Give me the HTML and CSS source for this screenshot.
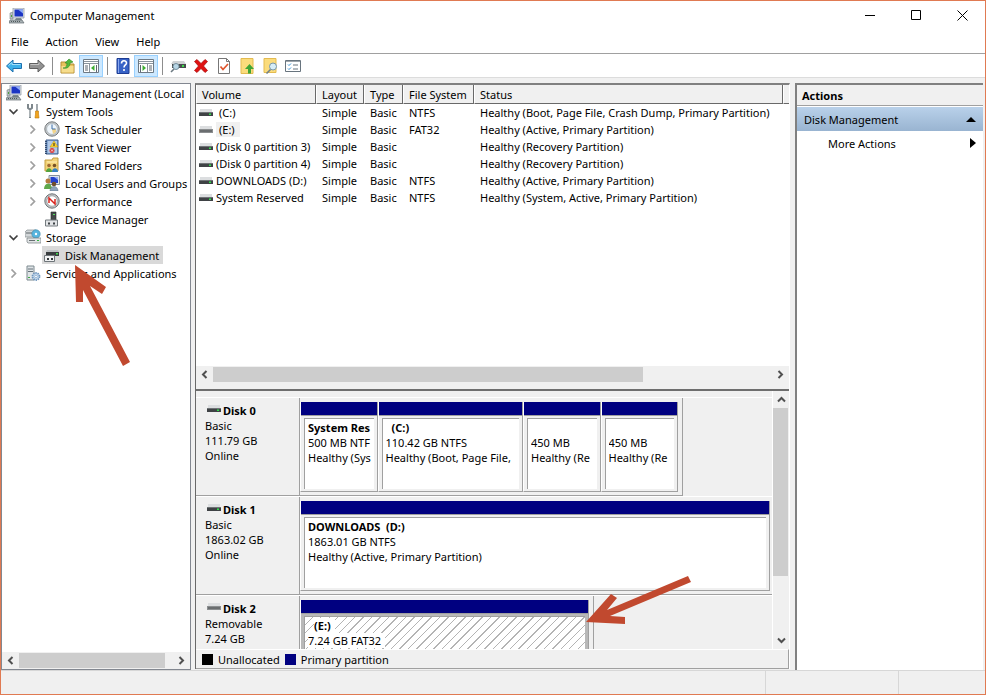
FILE: index.html
```
<!DOCTYPE html>
<html lang="en">
<head>
    <meta charset="UTF-8">
    <meta name="viewport" content="width=device-width, initial-scale=1.0">
    <title>Computer Management</title>
    <link rel="stylesheet" href="styles.css">
</head>
<body>
    <!-- Shared icons -->
    <svg class="defs" aria-hidden="true">
        <symbol id="computer" viewBox="0 0 16 16">
            <path d="M1 5l3-1v7H1z" fill="#b9c0c4" stroke="#7b8588" stroke-width=".6"/>
            <path d="M2 7h1v2H2z" fill="#4da03c"/>
            <path d="M4 0h11v10H4z" fill="#dfe3e8" stroke="#8a949e" stroke-width=".7"/>
            <path d="M5.500 1.500h8.500v7H5.500z" fill="#1c35c4"/>
            <path d="M9 1.500h5v4z" fill="#8eaaf5"/>
            <path d="M7 10h5l1 2H6z" fill="#7f8b92"/>
            <path d="M1 12h12l2 3H0z" fill="#aab3b6" stroke="#626c70" stroke-width=".7"/>
            <path d="M2 13.500h10" stroke="#4f585b" stroke-dasharray="1 1"/>
        </symbol>
        <symbol id="drive" viewBox="0 0 14 8">
            <path d="M1 0h12v3H1z" fill="#dcdee0"/>
            <path d="M0 3h14v4H0z" fill="#3f4245"/>
            <path d="M0 3h14v1H0z" fill="#6f7376"/>
            <path d="M10 4.500h2v1.500h-2z" fill="#2fe04a"/>
        </symbol>
        <symbol id="removable" viewBox="0 0 14 8">
            <path d="M1 0h12v3H1z" fill="#dcdee0"/>
            <path d="M0 3h14v4H0z" fill="#8b8e90"/>
            <path d="M1 4h12v2H1z" fill="#6a6d6f"/>
        </symbol>
        <symbol id="right" viewBox="0 0 9 9"><path d="M2.500 .5l4 4-4 4" fill="none" stroke="#a0a0a0" stroke-width="1.700"/></symbol>
        <symbol id="down" viewBox="0 0 9 9"><path d="M.5 2.500l4 4 4-4" fill="none" stroke="#404040" stroke-width="1.700"/></symbol>
        <symbol id="scroll-arrow" viewBox="0 0 9 9"><path d="M6.500 1L3 4.500 6.500 8" fill="none" stroke="#505050" stroke-width="2"/></symbol>
    </svg>

    <div class="window">
        <header class="titlebar">
            <svg class="icon"><use href="#computer"/></svg>
            <h1>Computer Management</h1>
            <div class="caption-buttons">
                <button aria-label="Minimize"><svg width="11" height="11"><path d="M0 5.500h10" stroke="#000"/></svg></button>
                <button aria-label="Maximize"><svg width="11" height="11"><path d="M.5 .5h9v9h-9z" fill="none" stroke="#000"/></svg></button>
                <button aria-label="Close"><svg width="11" height="11"><path d="M.5 .5l10 10M10.500 .5l-10 10" stroke="#000"/></svg></button>
            </div>
        </header>

        <nav class="menubar">
            <button>File</button>
            <button>Action</button>
            <button>View</button>
            <button>Help</button>
        </nav>

        <div class="toolbar">
            <button aria-label="Back">
                <svg class="icon" viewBox="0 0 16 16"><path d="M.5 8L7 2v3.500h8.500v5H7V14z" fill="#3eb1ea" stroke="#1c6fae"/><path d="M2.500 7.500L6 4.500v2h8.500" fill="none" stroke="#a4e1fb"/></svg>
            </button>
            <button aria-label="Forward">
                <svg class="icon" viewBox="0 0 16 16"><path d="M15.500 8L9 2v3.500H.5v5H9V14z" fill="#929292" stroke="#5f5f5f"/><path d="M1.500 6.500H10v-2" fill="none" stroke="#c4c4c4"/></svg>
            </button>
            <span class="separator"></span>
            <button aria-label="Up one level">
                <svg class="icon" viewBox="0 0 16 16"><path d="M1 4h5l1 2h7v9H1z" fill="#e8c25d" stroke="#b48e35"/><path d="M1.500 8h12v6.500h-12z" fill="#f6dd8d"/><path d="M3 10c3 0 4-2 4-5H5l4-4 4 3-3 1c0 4-3 6-7 5z" fill="#53b83c" stroke="#2f8a24" stroke-width=".6"/></svg>
            </button>
            <button class="pressed" aria-label="Show or hide console tree">
                <svg class="icon" viewBox="0 0 16 16"><path d="M.5 1.500h15v13H.5z" fill="#fff" stroke="#6d7984"/><path d="M1 3.500h14M1 5.500h14M6.500 6v8" stroke="#8a949d"/><path d="M2 8h3M2 10h3M2 12h3M13.500 7v7" stroke="#5c6670"/><path d="M11.500 7v6L8 10z" fill="#3dae33"/></svg>
            </button>
            <span class="separator"></span>
            <button aria-label="Help">
                <svg class="icon" viewBox="0 0 16 16"><path d="M2 .5h12v15H2z" fill="#3762c6" stroke="#1d3c93"/><path d="M3.500 1v14" stroke="#88a7ee"/><path d="M6.500 5.500c0-3.500 5-3.500 5-.5 0 2-2.500 2-2.500 4.500M9 11v2" fill="none" stroke="#fff" stroke-width="1.600"/></svg>
            </button>
            <button class="pressed" aria-label="Show or hide action pane">
                <svg class="icon" viewBox="0 0 16 16"><path d="M.5 1.500h15v13H.5z" fill="#fff" stroke="#6d7984"/><path d="M1 3.500h14M1 5.500h14M9.500 6v8" stroke="#8a949d"/><path d="M11 8h3M11 10h3M11 12h3M2.500 7v7" stroke="#5c6670"/><path d="M4.500 7v6L8 10z" fill="#3dae33"/></svg>
            </button>
            <span class="separator"></span>
            <button aria-label="Rescan disks">
                <svg class="icon" viewBox="0 0 16 16"><path d="M3 3h11l2 3H1z" fill="#cfd2d4"/><path d="M2 6h14v4H2z" fill="#484c4e"/><path d="M12 7h2v2h-2z" fill="#3fdc4c"/><circle cx="6" cy="8.500" r="3" fill="#b7d6e6" stroke="#76909e"/><path d="M4 11l-3 3" stroke="#6c7a82" stroke-width="1.600"/></svg>
            </button>
            <button aria-label="Delete">
                <svg class="icon" viewBox="0 0 16 16"><path d="M1.500 3.500L4 1.500l4 4 4-4 2.500 2L10.500 8l4 4.500-2.500 2-4-4-4 4-2.500-2L5.500 8z" fill="#e01212" stroke="#a30707" stroke-width=".7"/></svg>
            </button>
            <button aria-label="Properties">
                <svg class="icon" viewBox="0 0 16 16"><path d="M2.500 .5h8l3 3v12h-11z" fill="#fff" stroke="#777"/><path d="M10.500 .5v3h3" fill="none" stroke="#777"/><path d="M4.500 8.500l2.500 3 5-5.500" fill="none" stroke="#e0562d" stroke-width="1.700"/></svg>
            </button>
            <button aria-label="Open">
                <svg class="icon" viewBox="0 0 16 16"><path d="M2 .5h12v15H2z" fill="#fbdc7c" stroke="#e3bb50"/><path d="M10.500 6L15 11h-3v4.500H9V11H6z" fill="#3fa535"/></svg>
            </button>
            <button aria-label="Explore">
                <svg class="icon" viewBox="0 0 16 16"><path d="M2 .5h12v14H2z" fill="#fbdc7c" stroke="#e3bb50"/><circle cx="11" cy="8.500" r="3.500" fill="#d6edf7" stroke="#7897aa"/><path d="M8.500 11.500l-4 4" stroke="#70808a" stroke-width="1.600"/></svg>
            </button>
            <button aria-label="Settings">
                <svg class="icon" viewBox="0 0 16 16"><path d="M.5 2.500h15v11H.5z" fill="#fff" stroke="#68747e"/><path d="M1 3.500h14" stroke="#9da5ac"/><path d="M3 6.500l1 1L6 5.500M3 10.500l1 1L6 9.500" fill="none" stroke="#3392d8"/><path d="M8 7h5M8 11h5" stroke="#68747e"/></svg>
            </button>
        </div>

        <main class="content">
            <aside class="tree-pane">
                <ul class="tree">
                    <li class="root"><a href="#"><svg class="icon"><use href="#computer"/></svg>Computer Management (Local</a></li>
                    <li class="level1"><svg class="chevron"><use href="#down"/></svg><a href="#">
                        <svg class="icon" viewBox="0 0 16 16"><path d="M3 1v4l2 1.500L7 5V1M5 6v9" fill="none" stroke="#7e878c" stroke-width="2"/><path d="M5 7v7" stroke="#d9dddf"/><path d="M12 1v7" stroke="#8b9398" stroke-width="1.600"/><path d="M10.500 8h3v3l.5 4h-4l.5-4z" fill="#f1a41e" stroke="#bd780d" stroke-width=".6"/></svg>System Tools</a></li>
                    <li class="level2"><svg class="chevron"><use href="#right"/></svg><a href="#">
                        <svg class="icon" viewBox="0 0 16 16"><circle cx="8" cy="8" r="7.200" fill="#c6c9cb" stroke="#757a7d"/><circle cx="8" cy="8" r="5.400" fill="#eef5fb" stroke="#99a2a8" stroke-width=".6"/><path d="M8 8h4v3l-3 2z" fill="#f1d388"/><path d="M8 3.500V8h3.500" fill="none" stroke="#3d6fa8"/></svg>Task Scheduler</a></li>
                    <li class="level2"><svg class="chevron"><use href="#right"/></svg><a href="#">
                        <svg class="icon" viewBox="0 0 16 16"><path d="M2 1h12v14H2z" fill="#87a9d5" stroke="#42618e"/><path d="M4 3h9M4 5h9M4 7h9M4 9h9M4 11h9M4 13h9" stroke="#dce8f7"/><path d="M2 2v13" stroke="#314b70" stroke-width="2" stroke-dasharray="1 1"/><path d="M10 2l4 6H6z" fill="#ffd42c" stroke="#b99108" stroke-width=".5"/><path d="M10 4v3" stroke="#222"/><circle cx="8" cy="11.500" r="2.500" fill="#db3d3d"/><path d="M7 10.500l2 2m0-2l-2 2" stroke="#fff" stroke-width=".7"/></svg>Event Viewer</a></li>
                    <li class="level2"><svg class="chevron"><use href="#right"/></svg><a href="#">
                        <svg class="icon" viewBox="0 0 16 16"><path d="M1 3h7l1-2h5v13H1z" fill="#f2d277" stroke="#c49f42"/><path d="M3 5h10" stroke="#fff0b8"/><circle cx="5" cy="8.500" r="1.800" fill="#a06a34"/><circle cx="10.500" cy="8.500" r="1.800" fill="#775225"/><path d="M2 15c0-5 6-5 6 0z" fill="#53a33e"/><path d="M8 15c0-5 6-5 6 0z" fill="#3682c3"/></svg>Shared Folders</a></li>
                    <li class="level2"><svg class="chevron"><use href="#right"/></svg><a href="#">
                        <svg class="icon" viewBox="0 0 16 16"><path d="M5 .5h10.500v9H5z" fill="#e0e5ea" stroke="#85919c"/><path d="M6.500 2H14v6H6.500z" fill="#2443cd"/><path d="M10 2h4v3z" fill="#91adf4"/><circle cx="4" cy="6" r="2.500" fill="#b57b3e"/><circle cx="10" cy="9" r="2.300" fill="#704d2c"/><path d="M0 14c0-7 8-7 8 0z" fill="#60a84c"/><path d="M6 16c0-6 8-6 8 0z" fill="#8ca4bb" stroke="#596f83" stroke-width=".5"/></svg>Local Users and Groups</a></li>
                    <li class="level2"><svg class="chevron"><use href="#right"/></svg><a href="#">
                        <svg class="icon" viewBox="0 0 16 16"><circle cx="8" cy="8" r="7.200" fill="#bfc3c5" stroke="#6f7578"/><circle cx="8" cy="8" r="5.200" fill="#fff" stroke="#868d90" stroke-width=".6"/><path d="M5 10V5l6 6V6" fill="none" stroke="#d9241e" stroke-width="1.500"/></svg>Performance</a></li>
                    <li class="level2"><span class="chevron"></span><a href="#">
                        <svg class="icon" viewBox="0 0 16 16"><path d="M7 1h5v8H7z" fill="#45494b" stroke="#25282a" stroke-width=".6"/><path d="M9 3h2v1H9z" fill="#54df5d"/><path d="M1.500 9h12v6h-12z" fill="#e3e5e7" stroke="#747b7f"/><path d="M4 11.500h2v2H4zM9 11.500h2v2H9z" fill="#3c4144"/></svg>Device Manager</a></li>
                    <li class="level1"><svg class="chevron"><use href="#down"/></svg><a href="#">
                        <svg class="icon" viewBox="0 0 16 16"><path d="M0 3l2-2h9v7H0z" fill="#d2d6d8" stroke="#858c90" stroke-width=".7"/><path d="M1 4h6" stroke="#5c6468"/><circle cx="11" cy="5" r="4.200" fill="#58b5df" stroke="#3d84a6" stroke-width=".6"/><circle cx="11" cy="5" r="1.200" fill="#fff"/><path d="M2 9h14v5H3l-1-1z" fill="#e1e4e5" stroke="#747b7f" stroke-width=".7"/><path d="M4 11.500h6" stroke="#676e72"/><path d="M12 11h2v1h-2z" fill="#33b540"/></svg>Storage</a></li>
                    <li class="level2"><span class="chevron"></span><a href="#" class="selected">
                        <svg class="icon" viewBox="0 0 16 16"><path d="M3 3h11l1 2H2z" fill="#bfc3c5"/><path d="M2 5h13v4H2z" fill="#393d3f"/><path d="M12 6h2v1.500h-2z" fill="#42db50"/><path d="M.5 8.500h10v6H.5z" fill="#f0f1f2" stroke="#6e7579"/><path d="M3 11h2v2H3zM7 11h2v2H7z" fill="#34393c"/></svg>Disk Management</a></li>
                    <li class="level1"><svg class="chevron"><use href="#right"/></svg><a href="#">
                        <svg class="icon" viewBox="0 0 16 16"><path d="M2 1h7v14H2z" fill="#dfe4e7" stroke="#7d898f"/><path d="M3 4h5M3 6.500h5" stroke="#66727a"/><path d="M3 12h2v1H3z" fill="#3dac42"/><circle cx="11" cy="11.500" r="3.500" fill="#c8dcf0" stroke="#6f95bd" stroke-width="1.800" stroke-dasharray="1.400 .8"/><circle cx="11" cy="11.500" r="1.300" fill="#fff" stroke="#6f95bd" stroke-width=".6"/></svg>Services and Applications</a></li>
                </ul>
                <div class="hscroll">
                    <button aria-label="Scroll left"><svg class="arrow"><use href="#scroll-arrow"/></svg></button>
                    <div class="track"><div class="thumb tree-thumb"></div></div>
                    <button aria-label="Scroll right"><svg class="arrow turn-right"><use href="#scroll-arrow"/></svg></button>
                </div>
            </aside>

            <section class="middle">
                <div class="volumes">
                    <div class="table-wrap">
                        <table>
                            <colgroup>
                                <col class="col-volume"><col class="col-layout"><col class="col-type"><col class="col-fs"><col class="col-status"><col>
                            </colgroup>
                            <thead>
                                <tr><th>Volume</th><th>Layout</th><th>Type</th><th>File System</th><th>Status</th><th></th></tr>
                            </thead>
                            <tbody>
                                <tr><td><svg class="drive"><use href="#drive"/></svg><span class="letter">(C:)</span></td><td>Simple</td><td>Basic</td><td>NTFS</td><td>Healthy (Boot, Page File, Crash Dump, Primary Partition)</td><td></td></tr>
                                <tr><td><svg class="drive"><use href="#removable"/></svg><span class="letter current">(E:)</span></td><td>Simple</td><td>Basic</td><td>FAT32</td><td>Healthy (Active, Primary Partition)</td><td></td></tr>
                                <tr><td><svg class="drive"><use href="#drive"/></svg>(Disk 0 partition 3)</td><td>Simple</td><td>Basic</td><td></td><td>Healthy (Recovery Partition)</td><td></td></tr>
                                <tr><td><svg class="drive"><use href="#drive"/></svg>(Disk 0 partition 4)</td><td>Simple</td><td>Basic</td><td></td><td>Healthy (Recovery Partition)</td><td></td></tr>
                                <tr><td><svg class="drive"><use href="#drive"/></svg>DOWNLOADS (D:)</td><td>Simple</td><td>Basic</td><td>NTFS</td><td>Healthy (Active, Primary Partition)</td><td></td></tr>
                                <tr><td><svg class="drive"><use href="#drive"/></svg>System Reserved</td><td>Simple</td><td>Basic</td><td>NTFS</td><td>Healthy (System, Active, Primary Partition)</td><td></td></tr>
                            </tbody>
                        </table>
                    </div>
                    <div class="hscroll">
                        <button aria-label="Scroll left"><svg class="arrow"><use href="#scroll-arrow"/></svg></button>
                        <div class="track"><div class="thumb volume-thumb"></div></div>
                        <button aria-label="Scroll right"><svg class="arrow turn-right"><use href="#scroll-arrow"/></svg></button>
                    </div>
                </div>

                <div class="disks">
                    <div class="disk-view">
                        <div class="disk-list">
                            <div class="disk">
                                <div class="disk-info">
                                    <h2><svg class="drive"><use href="#drive"/></svg>Disk 0</h2>
                                    <p>Basic</p><p>111.79 GB</p><p>Online</p>
                                </div>
                                <div class="partitions disk0">
                                    <div class="partition small"><div class="bar"></div><div class="details"><h3>System Res</h3><p>500 MB NTF</p><p>Healthy (Sys</p></div></div>
                                    <div class="partition large"><div class="bar"></div><div class="details"><h3 class="letter-only">(C:)</h3><p>110.42 GB NTFS</p><p>Healthy (Boot, Page File,</p></div></div>
                                    <div class="partition small"><div class="bar"></div><div class="details"><h3></h3><p>450 MB</p><p>Healthy (Re</p></div></div>
                                    <div class="partition small"><div class="bar"></div><div class="details"><h3></h3><p>450 MB</p><p>Healthy (Re</p></div></div>
                                </div>
                            </div>
                            <div class="disk">
                                <div class="disk-info">
                                    <h2><svg class="drive"><use href="#drive"/></svg>Disk 1</h2>
                                    <p>Basic</p><p>1863.02 GB</p><p>Online</p>
                                </div>
                                <div class="partitions disk1">
                                    <div class="partition large"><div class="bar"></div><div class="details"><h3>DOWNLOADS&nbsp; (D:)</h3><p>1863.01 GB NTFS</p><p>Healthy (Active, Primary Partition)</p></div></div>
                                </div>
                            </div>
                            <div class="disk">
                                <div class="disk-info">
                                    <h2><svg class="drive"><use href="#removable"/></svg>Disk 2</h2>
                                    <p>Removable</p><p>7.24 GB</p>
                                </div>
                                <div class="partitions disk2">
                                    <div class="partition large active"><div class="bar"></div><div class="details"><h3 class="letter-only"><span>(E:)</span></h3><p><span>7.24 GB FAT32</span></p></div></div>
                                </div>
                            </div>
                        </div>
                        <div class="vscroll">
                            <button aria-label="Scroll up"><svg class="arrow turn-up"><use href="#scroll-arrow"/></svg></button>
                            <div class="vtrack"><div class="vthumb"></div></div>
                            <button aria-label="Scroll down"><svg class="arrow turn-down"><use href="#scroll-arrow"/></svg></button>
                        </div>
                    </div>
                    <div class="legend">
                        <span class="swatch unallocated"></span><span>Unallocated</span>
                        <span class="swatch primary"></span><span>Primary partition</span>
                    </div>
                </div>
            </section>

            <aside class="actions">
                <h2>Actions</h2>
                <button class="group">Disk Management<svg width="10" height="5"><path d="M5 0l5 5H0z"/></svg></button>
                <button class="more">More Actions<svg width="6" height="10"><path d="M0 0l6 5-6 5z"/></svg></button>
            </aside>
        </main>

        <footer class="statusbar"><span></span><span></span><span></span></footer>

        <!-- Pointers to the tree item and the E: partition -->
        <svg class="pointer tree-pointer" viewBox="0 0 56 102"><path d="M0 0L31 22 27 29 15 21 55 97 48 101 8 25V37H1z"/></svg>
        <svg class="pointer disk-pointer" viewBox="0 0 106 50"><path d="M0 46L25 18 31 22 21 34 102 0 105 6 24 40 39 41V48z"/></svg>
    </div>
</body>
</html>
```

FILE: styles.css
```
* {
    box-sizing: border-box;
}
body {
    margin: 0;
    font-family: "Noto Sans", "Open Sans", sans-serif;
    font-size: 11px;
    line-height: 15px;
    color: #000;
}
h1, h2, h3, p, ul {
    margin: 0;
    padding: 0;
    font-size: inherit;
}
button {
    margin: 0;
    padding: 0;
    border: none;
    background: none;
    font: inherit;
    color: inherit;
}
a {
    color: inherit;
    text-decoration: none;
}
svg {
    display: block;
    flex: none;
}
.defs {
    position: absolute;
    width: 0;
    height: 0;
}
.icon {
    width: 16px;
    height: 16px;
}
.window {
    position: relative;
    display: flex;
    flex-direction: column;
    height: 100vh;
    border: 1px solid #e07a52;
    background: #fff;
    overflow: hidden;
}

/* Title, menu and toolbar */
.titlebar {
    display: flex;
    align-items: center;
    height: 29px;
    padding-left: 8px;
    gap: 5px;
}
.titlebar h1 {
    font-weight: normal;
}
.caption-buttons {
    display: flex;
    margin-left: auto;
}
.caption-buttons button {
    display: flex;
    align-items: center;
    justify-content: center;
    width: 46px;
    height: 29px;
}
.menubar {
    display: flex;
    align-items: center;
    height: 24px;
    padding-left: 10px;
    gap: 17px;
    border-bottom: 1px solid #a0a0a0;
}
.toolbar {
    display: flex;
    align-items: center;
    height: 24px;
    padding: 1px 0 0 1px;
    border-bottom: 1px solid #dcdcdc;
}
.toolbar button {
    display: flex;
    align-items: center;
    justify-content: center;
    width: 23px;
    height: 22px;
}
.toolbar .pressed {
    width: 24px;
    background: #cce8ff;
    border: 1px solid #99d1ff;
}
.separator {
    width: 1px;
    height: 18px;
    margin: 0 3px 0 4px;
    background: #8d8d8d;
}

/* Three panes */
.content {
    display: grid;
    grid-template-columns: 190px 1fr 188px;
    column-gap: 5px;
    flex: 1;
    min-height: 0;
    padding: 5px 2px 0 0;
    background: #f0f0f0;
}
.tree-pane {
    display: flex;
    flex-direction: column;
    min-width: 0;
    border: 1px solid #828790;
    background: #fff;
}
.tree {
    flex: 1;
    min-height: 0;
    list-style: none;
    overflow: hidden;
}
.tree li {
    display: flex;
    align-items: center;
    height: 18px;
    white-space: nowrap;
}
.tree a {
    display: flex;
    align-items: center;
    height: 18px;
    gap: 5px;
    padding: 0 4px 0 2px;
}
.tree .selected {
    background: #d9d9d9;
}
.root {
    padding-left: 2px;
}
.level1 {
    padding-left: 4px;
}
.level2 {
    padding-left: 23px;
}
.chevron {
    width: 15px;
    height: 9px;
    margin-right: 2px;
}

/* Scroll bars */
.hscroll {
    display: flex;
    flex: none;
    height: 17px;
    background: #f0f0f0;
}
.hscroll button, .vscroll button {
    display: flex;
    align-items: center;
    justify-content: center;
    flex: none;
    width: 17px;
    height: 17px;
}
.arrow {
    width: 9px;
    height: 9px;
}
.turn-right {
    transform: rotate(180deg);
}
.turn-up {
    transform: rotate(90deg);
}
.turn-down {
    transform: rotate(270deg);
}
.track {
    flex: 1;
    padding: 1px 0;
}
.thumb {
    height: 15px;
    background: #cdcdcd;
}
.tree-thumb {
    width: 95%;
}
.volume-thumb {
    width: 77%;
}

/* Volume list */
.middle {
    display: flex;
    flex-direction: column;
    min-width: 0;
    margin: 0 0 1px -1px;
    border-left: 1px solid #696969;
    border-top: 2px solid #808080;
    border-right: 1px solid #fff;
}
.volumes {
    display: flex;
    flex-direction: column;
    flex: 303;
    min-height: 0;
    padding-bottom: 6px;
    border-bottom: 2px solid #6e6e6e;
    background: #f0f0f0;
}
.table-wrap {
    flex: 1;
    min-height: 0;
    background: #fff;
    overflow: hidden;
}
table {
    width: 100%;
    table-layout: fixed;
    border-collapse: separate;
    border-spacing: 0;
}
.col-volume {
    width: 120px;
}
.col-layout {
    width: 48px;
}
.col-type {
    width: 39px;
}
.col-fs {
    width: 71px;
}
.col-status {
    width: 309px;
}
th {
    height: 19px;
    padding: 0 0 0 5px;
    border-right: 1px solid #696969;
    border-bottom: 1px solid #696969;
    border-left: 1px solid #fff;
    background: #f0f0f0;
    font-weight: normal;
    text-align: left;
    white-space: nowrap;
}
th:last-child {
    border-right: none;
}
td {
    height: 17px;
    padding: 0 0 0 6px;
    white-space: nowrap;
}
td:first-child {
    display: flex;
    align-items: center;
    gap: 3px;
    padding-left: 3px;
}
.drive {
    width: 14px;
    height: 8px;
}
.letter {
    padding: 0 5px 0 3px;
}
.current {
    background: #f0f0f0;
}

/* Disk map */
.disks {
    display: flex;
    flex-direction: column;
    flex: 281;
    min-height: 0;
    border-bottom: 1px solid #a0a0a0;
    background: #f0f0f0;
}
.disk-view {
    display: flex;
    flex: 1;
    min-height: 0;
}
.disk-list {
    flex: 1;
    min-width: 0;
    padding-top: 6px;
    overflow: hidden;
}
.disk {
    display: flex;
    height: 99px;
    border-top: 1px solid #fff;
}
.disk-info {
    width: 104px;
    padding: 5px 8px 0 9px;
    border-right: 1px solid #a0a0a0;
    border-bottom: 1px solid #a0a0a0;
}
.disk-info h2 {
    display: flex;
    align-items: center;
    height: 15px;
    gap: 2px;
    padding-left: 2px;
}
.disk-info .drive {
    margin-bottom: 4px;
}
.partitions {
    display: flex;
    padding: 4px 4px 3px 0;
    border-right: 1px solid #a0a0a0;
    border-bottom: 1px solid #a0a0a0;
}
.disk0 {
    width: 81%;
    max-width: 383px;
}
.disk1 {
    flex: 1;
    padding-right: 2px;
    border-right: none;
}
.disk2 {
    width: 62%;
    max-width: 294px;
}
.partition {
    display: flex;
    flex-direction: column;
    flex: 1;
    min-width: 0;
    border-right: 1px solid #a0a0a0;
    border-bottom: 1px solid #a0a0a0;
    border-left: 1px solid #fff;
}
.disk0 .small {
    flex: 20;
}
.disk0 .large {
    flex: 38;
}
.bar {
    height: 14px;
    border-bottom: 1px solid #a0a0a0;
    background: #000080;
}
.details {
    flex: 1;
    margin: 2px 3px;
    padding: 1px 0 0 3px;
    border-top: 1px solid #a0a0a0;
    border-left: 1px solid #a0a0a0;
    background: #fff;
    white-space: nowrap;
}
.details h3, .details p {
    height: 15px;
    overflow: hidden;
}
.details .letter-only {
    padding-left: 6px;
}
.active {
    background: #b8b8b8;
}
.active .details {
    background: repeating-linear-gradient(135deg, #fff 0 5px, #b4b4b4 5px 6px);
}
.active span {
    display: inline-block;
    padding-right: 4px;
    background: #fff;
}
.vscroll {
    display: flex;
    flex-direction: column;
    width: 17px;
    border-left: 1px solid #fff;
}
.vtrack {
    flex: 1;
}
.vthumb {
    width: 15px;
    height: 75%;
    background: #cdcdcd;
}
.legend {
    display: flex;
    align-items: center;
    flex: none;
    height: 19px;
    padding-left: 6px;
    gap: 5px;
    border-top: 1px solid #fff;
    border-right: 1px solid #a0a0a0;
}
.swatch {
    width: 11px;
    height: 11px;
}
.unallocated {
    background: #000;
}
.primary {
    background: #000080;
}

/* Actions */
.actions {
    border-top: 2px solid #808080;
    border-left: 2px solid #808080;
    background: #fff;
}
.actions h2 {
    height: 21px;
    padding: 3px 5px;
    border-bottom: 1px solid #a0a0a0;
    background: #f0f0f0;
}
.actions button {
    display: flex;
    align-items: center;
    justify-content: space-between;
    width: 100%;
    height: 24px;
    padding: 0 7px;
}
.actions .group {
    margin-top: 1px;
    background: linear-gradient(#b9d1ea, #99b4d1);
}
.actions .more {
    padding-left: 31px;
}

.statusbar {
    display: grid;
    grid-template-columns: 1fr 133px 87px;
    flex: none;
    height: 24px;
    border-top: 1px solid #d7d7d7;
    background: #f0f0f0;
}
.statusbar span + span {
    border-left: 1px solid #d7d7d7;
}

.pointer {
    position: absolute;
    fill: #c1492f;
}
.tree-pointer {
    left: 74px;
    top: 264px;
    width: 56px;
    height: 102px;
}
.disk-pointer {
    left: 585px;
    top: 575px;
    width: 106px;
    height: 50px;
}
```
